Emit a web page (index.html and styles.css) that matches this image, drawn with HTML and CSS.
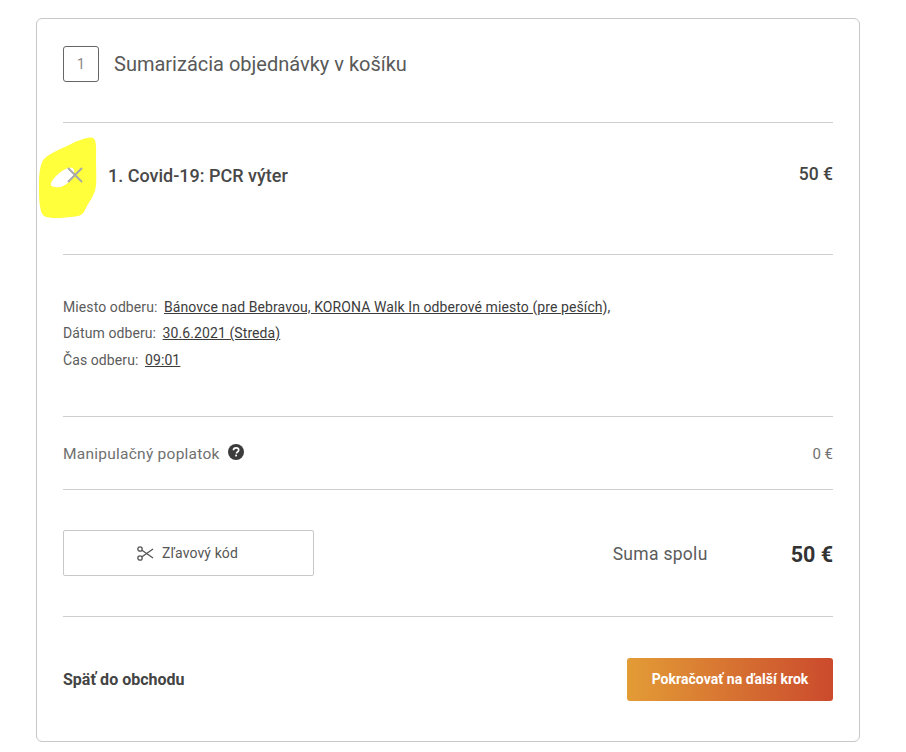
FILE: index.html
```html
<!DOCTYPE html>
<html lang="sk">
<head>
<meta charset="utf-8">
<title>Sumarizácia objednávky</title>
<link rel="stylesheet" href="styles.css">
</head>
<body>
<main class="card">
  <header class="section head">
    <span class="step">1</span>
    <h1 class="title">Sumarizácia objednávky v košíku</h1>
  </header>
  <section class="section item">
    <svg class="marker" width="60" height="82" viewBox="0 0 60 82" aria-hidden="true">
      <path fill="#ffff3c" d="M30 8C38 4 50-1 54 1c4 2 3 12 3 22 0 11 1 24-1 31-3 8-7 12-10 19-3 6-6 6-14 7-9 1-22 2-27-1C0 75 0 60 0 48c0-11 1-21 5-26C11 16 22 12 30 8Z"/>
      <path fill="#fff" d="M12 46c3-6 9-12 17-15 5-1 7 1 6 5-1 6-7 12-13 14-4 1-12 0-10-4Z"/>
    </svg>
    <svg class="remove" width="18" height="18" viewBox="0 0 18 18" aria-hidden="true">
      <path d="M2 2l14 14M16 2L2 16" stroke="#a9a9a9" stroke-width="2" fill="none"/>
    </svg>
    <span class="item-name">1. Covid-19: PCR výter</span>
    <span class="item-price">50 €</span>
  </section>
  <section class="section details">
    <p class="detail">Miesto odberu: <a class="link" href="#">Bánovce nad Bebravou, KORONA Walk In odberové miesto (pre peších),</a></p>
    <p class="detail">Dátum odberu: <a class="link" href="#">30.6.2021 (Streda)</a></p>
    <p class="detail">Čas odberu: <a class="link" href="#">09:01</a></p>
  </section>
  <section class="section fee">
    <span class="fee-label">Manipulačný poplatok
      <svg class="help" width="16" height="16" viewBox="0 0 16 16" aria-hidden="true">
        <circle cx="8" cy="8" r="8" fill="#3c3c3c"/>
        <path d="M5.4 6.2C5.5 4.7 6.6 3.8 8.1 3.8c1.5 0 2.6.9 2.6 2.2 0 1-.6 1.5-1.3 2-.6.4-.9.7-.9 1.4" fill="none" stroke="#fff" stroke-width="1.7"/>
        <rect x="7.2" y="10.6" width="1.8" height="1.8" fill="#fff"/>
      </svg>
    </span>
    <span class="fee-value">0 €</span>
  </section>
  <section class="section totals">
    <button class="coupon" type="button">
      <svg width="17" height="15" viewBox="0 0 17 15" aria-hidden="true">
        <g fill="none" stroke="#555" stroke-width="1.3">
          <circle cx="3" cy="3" r="2.2"/>
          <circle cx="3" cy="12" r="2.2"/>
          <path d="M5 4.2L16 12M5 10.8L16 3"/>
        </g>
      </svg>
      Zľavový kód
    </button>
    <span class="sum-label">Suma spolu</span>
    <strong class="sum-value">50 €</strong>
  </section>
  <footer class="section actions">
    <a class="back" href="#">Späť do obchodu</a>
    <button class="next" type="button">Pokračovať na ďalší krok</button>
  </footer>
</main>
</body>
</html>
```

FILE: styles.css
```css
* { box-sizing: border-box; }
html, body { margin: 0; background: #fff; }
body {
  padding: 18px 46px 10px 36px;
  font-family: Roboto, "Liberation Sans", sans-serif;
  color: #444;
}
.card {
  height: 724px;
  padding: 0 26px;
  border: 1px solid #c8c8c8;
  border-radius: 6px;
  background: #fff;
  display: flex;
  flex-direction: column;
}
.section { border-bottom: 1px solid #cfcfcf; display: flex; align-items: center; }
.head { height: 104px; padding-bottom: 14px; gap: 15px; }
.step {
  width: 36px;
  height: 36px;
  border: 1px solid #666;
  border-radius: 3px;
  display: flex;
  align-items: center;
  justify-content: center;
  font-size: 14px;
  color: #888;
}
.title { margin: 0; font-size: 20px; font-weight: 400; color: #595959; }
.item { position: relative; height: 132px; padding-bottom: 27px; }
.marker { position: absolute; left: -24px; top: 14px; }
.remove { position: relative; margin-left: 3px; margin-right: 24px; }
.item-name { position: relative; font-size: 18px; font-weight: 500; color: #484848; }
.item-price { margin-left: auto; font-size: 17.5px; font-weight: 500; color: #444; margin-top: -2px; }
.details {
  height: 162px;
  padding-bottom: 4px;
  flex-direction: column;
  align-items: flex-start;
  justify-content: center;
  gap: 0;
}
.detail { margin: 0; font-size: 14px; line-height: 26.5px; color: #5c5c5c; letter-spacing: 0.09px; }
.link { margin-left: 3px; color: #3c3c3c; text-decoration: underline; }
.fee { height: 73px; justify-content: space-between; padding-top: 1px; }
.fee-label { font-size: 15.5px; color: #707070; display: flex; align-items: center; gap: 8px; letter-spacing: 0.25px; }
.help { margin-top: -3px; }
.fee-value { font-size: 15px; color: #707070; }
.totals { height: 127px; }
.coupon {
  width: 251px;
  height: 46px;
  border: 1px solid #c8c8c8;
  border-radius: 2px;
  background: #fff;
  display: flex;
  align-items: center;
  justify-content: center;
  gap: 8px;
  font: 400 14px Roboto, "Liberation Sans", sans-serif;
  color: #555;
  letter-spacing: 0.1px;
}
.coupon svg { margin-left: -2px; }
.sum-label { margin-left: auto; margin-top: 2px; font-size: 17.5px; color: #5c5c5c; letter-spacing: 0.3px; }
.sum-value { margin-left: 83px; margin-top: 2px; font-size: 21.5px; font-weight: 700; color: #333; }
.actions { flex: 1; border-bottom: 0; justify-content: space-between; padding-bottom: 0; }
.back { margin-top: 1px; font-size: 16px; font-weight: 700; color: #444; text-decoration: none; }
.next {
  width: 206px;
  height: 43px;
  border: 0;
  border-radius: 3px;
  background: linear-gradient(90deg, #e39c36, #cb4a2d);
  color: #fff;
  font: 700 14px Roboto, "Liberation Sans", sans-serif;
  letter-spacing: 0.03px;
}
```
